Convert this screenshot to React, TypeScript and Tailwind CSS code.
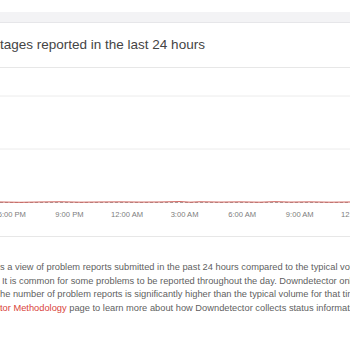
import React from 'react'

const labels = ['6:00 PM', '9:00 PM', '12:00 AM', '3:00 AM', '6:00 AM', '9:00 AM', '12:00 PM']

// small wiggles of the reports line along the baseline
const redPoints = [
  [0, 134], [20, 134.3], [40, 134], [60, 133.8], [80, 134.2], [100, 134], [120, 133.9], [140, 134.1],
  [160, 134], [180, 133.6], [190, 134.2], [200, 133.8], [220, 134.1], [240, 133.9], [260, 134.2],
  [275, 133.7], [290, 134.1], [310, 133.9], [330, 134.2], [350, 134],
]
  .map((p) => p.join(','))
  .join(' ')

const App = () => {
  return (
    <div className="h-[350px] w-[350px] overflow-hidden bg-white font-['Liberation_Sans',Arial,sans-serif]">
      <div className="h-[12px]" />
      <div className="h-[11px] border-b border-[#e6e6e9] bg-[#f3f3f5]" />
      <div className="flex h-[45px] items-center border-b border-[#e7e7e7]">
        <h5 className="-ml-[18px] whitespace-nowrap text-[13.5px] text-[#444]">
          Outages reported in the last 24 hours
        </h5>
      </div>
      <div className="h-[136px]">
        <svg width="350" height="136" viewBox="0 0 350 136" className="block">
          <line x1="0" y1="28" x2="350" y2="28" stroke="#ececec" strokeWidth="1" />
          <line x1="0" y1="81" x2="350" y2="81" stroke="#ececec" strokeWidth="1" />
          <line x1="0" y1="134.5" x2="350" y2="134.5" stroke="#8a8a8a" strokeWidth="0.8" strokeDasharray="3 2" />
          <polyline points={redPoints} fill="none" stroke="#d0605a" strokeWidth="1" />
        </svg>
      </div>
      <div className="-ml-[17px] flex h-[22px] items-center">
        {labels.map((l, i) => (
          <div key={i} className="w-[57.6px] shrink-0 whitespace-nowrap text-center text-[7.6px] text-[#7d7d7d]">
            {l}
          </div>
        ))}
      </div>
      <div className="h-[11px] border-b border-[#e7e7e7]" />
      <div className="pt-[24px] text-[9.3px] leading-[13.5px] text-[#5f5f5f]">
        <div className="whitespace-nowrap">
          s a view of problem reports submitted in the past 24 hours compared to the typical volume of reports by time of day.
        </div>
        <div className="ml-[2px] whitespace-nowrap">
          It is common for some problems to be reported throughout the day. Downdetector only reports an incident when
        </div>
        <div className="whitespace-nowrap">
          he number of problem reports is significantly higher than the typical volume for that time of day. Visit the
        </div>
        <div className="whitespace-nowrap">
          <a className="text-[#d9443b]">tor Methodology</a> page to learn more about how Downdetector collects status information and detects problems.
        </div>
      </div>
    </div>
  )
}

export default App
